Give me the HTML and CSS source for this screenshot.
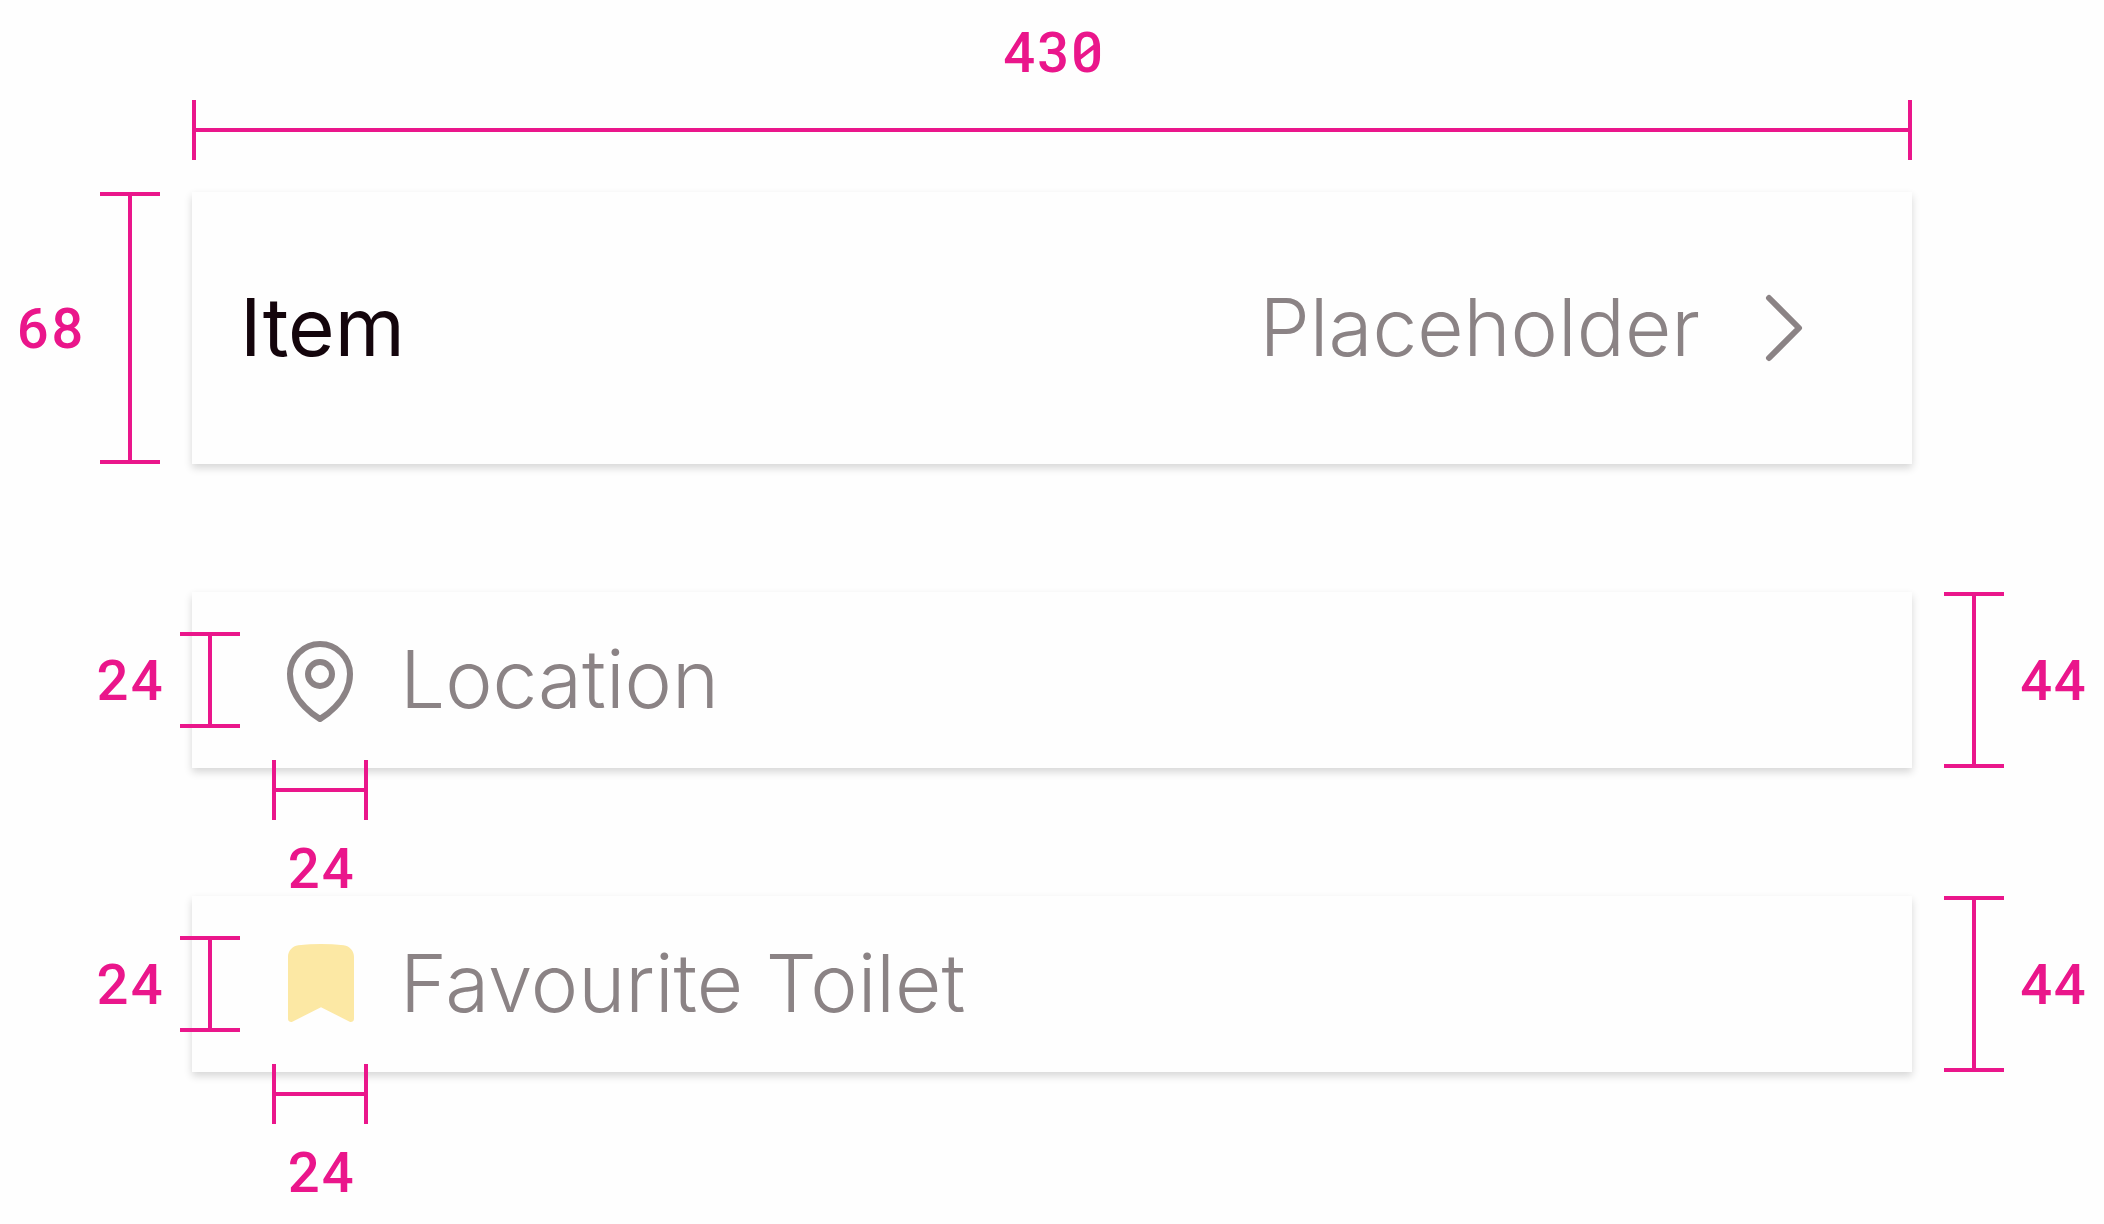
FILE: index.html
```html
<!DOCTYPE html>
<html lang="en">
<head>
<meta charset="utf-8">
<meta name="viewport" content="width=device-width, initial-scale=1">
<title>List item sizes</title>
<link rel="stylesheet" href="styles.css">
</head>
<body>
<main class="spec">
  <div class="measure measure-top">
    <span class="size">430</span>
    <span class="ruler ruler-x"></span>
  </div>

  <div class="measure measure-left">
    <span class="size">68</span>
    <span class="ruler ruler-y"></span>
  </div>
  <button class="item item-large" type="button">
    <span class="title">Item</span>
    <span class="value">Placeholder</span>
    <svg class="icon" viewBox="0 0 24 24" aria-hidden="true"><path class="stroke" d="m8.25 4.5 7.5 7.5-7.5 7.5"/></svg>
  </button>

  <div class="item item-small">
    <div class="icon-box">
      <svg class="icon" viewBox="0 0 24 24" aria-hidden="true"><path class="stroke" d="M15 10.5a3 3 0 1 1-6 0 3 3 0 0 1 6 0Z"/><path class="stroke" d="M19.5 10.5c0 7.142-7.5 11.25-7.5 11.25S4.5 17.642 4.5 10.5a7.5 7.5 0 1 1 15 0Z"/></svg>
      <div class="measure icon-height"><span class="size">24</span><span class="ruler ruler-y"></span></div>
      <div class="measure icon-width"><span class="ruler ruler-x"></span><span class="size">24</span></div>
    </div>
    <span class="value">Location</span>
  </div>
  <div class="measure measure-right">
    <span class="ruler ruler-y"></span>
    <span class="size">44</span>
  </div>

  <div class="item item-small">
    <div class="icon-box">
      <svg class="icon" viewBox="-.25 .25 24 24" aria-hidden="true"><path class="bookmark" d="M6.32 2.577a49.255 49.255 0 0 1 11.36 0c1.497.174 2.57 1.46 2.57 2.93V21a.75.75 0 0 1-1.085.67L12 18.089l-7.165 3.583A.75.75 0 0 1 3.75 21V5.507c0-1.47 1.073-2.756 2.57-2.93Z"/></svg>
      <div class="measure icon-height"><span class="size">24</span><span class="ruler ruler-y"></span></div>
      <div class="measure icon-width"><span class="ruler ruler-x"></span><span class="size">24</span></div>
    </div>
    <span class="value">Favourite Toilet</span>
  </div>
  <div class="measure measure-right">
    <span class="ruler ruler-y"></span>
    <span class="size">44</span>
  </div>
</main>
</body>
</html>
```
FILE: styles.css
```css
:root {
  --pink: #ea168b;
  --grey: #8b8385;
  --ink: #14050c;
  --paper: #fefefe;
}

* {
  box-sizing: border-box;
}

body {
  margin: 0;
  background: var(--paper);
  font-family: Inter, "Liberation Sans", sans-serif;
}

.spec {
  display: grid;
  grid-template-columns: 192px 1fr 192px;
  padding: 20px 0 144px;
}

/* Measurements */
.measure {
  display: flex;
  align-items: center;
  gap: 16px;
  color: var(--pink);
}

.measure-top {
  grid-column: 2;
  flex-direction: column;
  margin-bottom: 32px;
}

.measure-left {
  grid-column: 1;
  justify-content: flex-end;
  padding-right: 32px;
}

.measure-right {
  grid-column: 3;
  padding-left: 32px;
  margin-top: 128px;
}

.size {
  padding-bottom: 4px;
  font-family: "Roboto Mono", Roboto, sans-serif;
  font-size: 56px;
  font-weight: 500;
  line-height: 60px;
  font-variant-numeric: slashed-zero;
}

.measure-top .size,
.icon-width .size {
  padding-left: 3px;
}

.ruler {
  flex: none;
  align-self: stretch;
}

.ruler-x {
  height: 60px;
  border: solid var(--pink);
  border-width: 0 4px;
  background: linear-gradient(var(--pink), var(--pink)) center / 100% 4px no-repeat;
}

.ruler-y {
  width: 60px;
  border: solid var(--pink);
  border-width: 4px 0;
  background: linear-gradient(var(--pink), var(--pink)) center / 4px 100% no-repeat;
}

/* List items */
.item {
  grid-column: 2;
  display: flex;
  align-items: center;
  border: 0;
  background: var(--paper);
  box-shadow: 0 4px 8px rgb(0 0 0 / 16%);
  font: inherit;
  font-size: 80px;
  line-height: 92px;
  text-align: left;
}

.item-large {
  gap: 36px;
  padding: 88px 80px 88px 48px;
}

.item-small {
  gap: 32px;
  margin-top: 128px;
  padding: 40px 80px;
}

.title,
.value {
  padding-bottom: 2px;
}

.title {
  flex: 1;
  color: var(--ink);
}

.value {
  color: var(--grey);
  font-weight: 300;
}

.icon {
  display: block;
  width: 96px;
  height: 96px;
}

.stroke {
  fill: none;
  stroke: var(--grey);
  stroke-width: 1.5;
  stroke-linecap: round;
  stroke-linejoin: round;
}

.bookmark {
  fill: #fce8a4;
}

/* Measurements laid over the icon's surroundings */
.icon-box {
  position: relative;
}

.icon-height {
  position: absolute;
  top: 0;
  bottom: 0;
  right: calc(100% + 32px);
}

.icon-width {
  position: absolute;
  top: calc(100% + 32px);
  left: 0;
  right: 0;
  flex-direction: column;
}
```
